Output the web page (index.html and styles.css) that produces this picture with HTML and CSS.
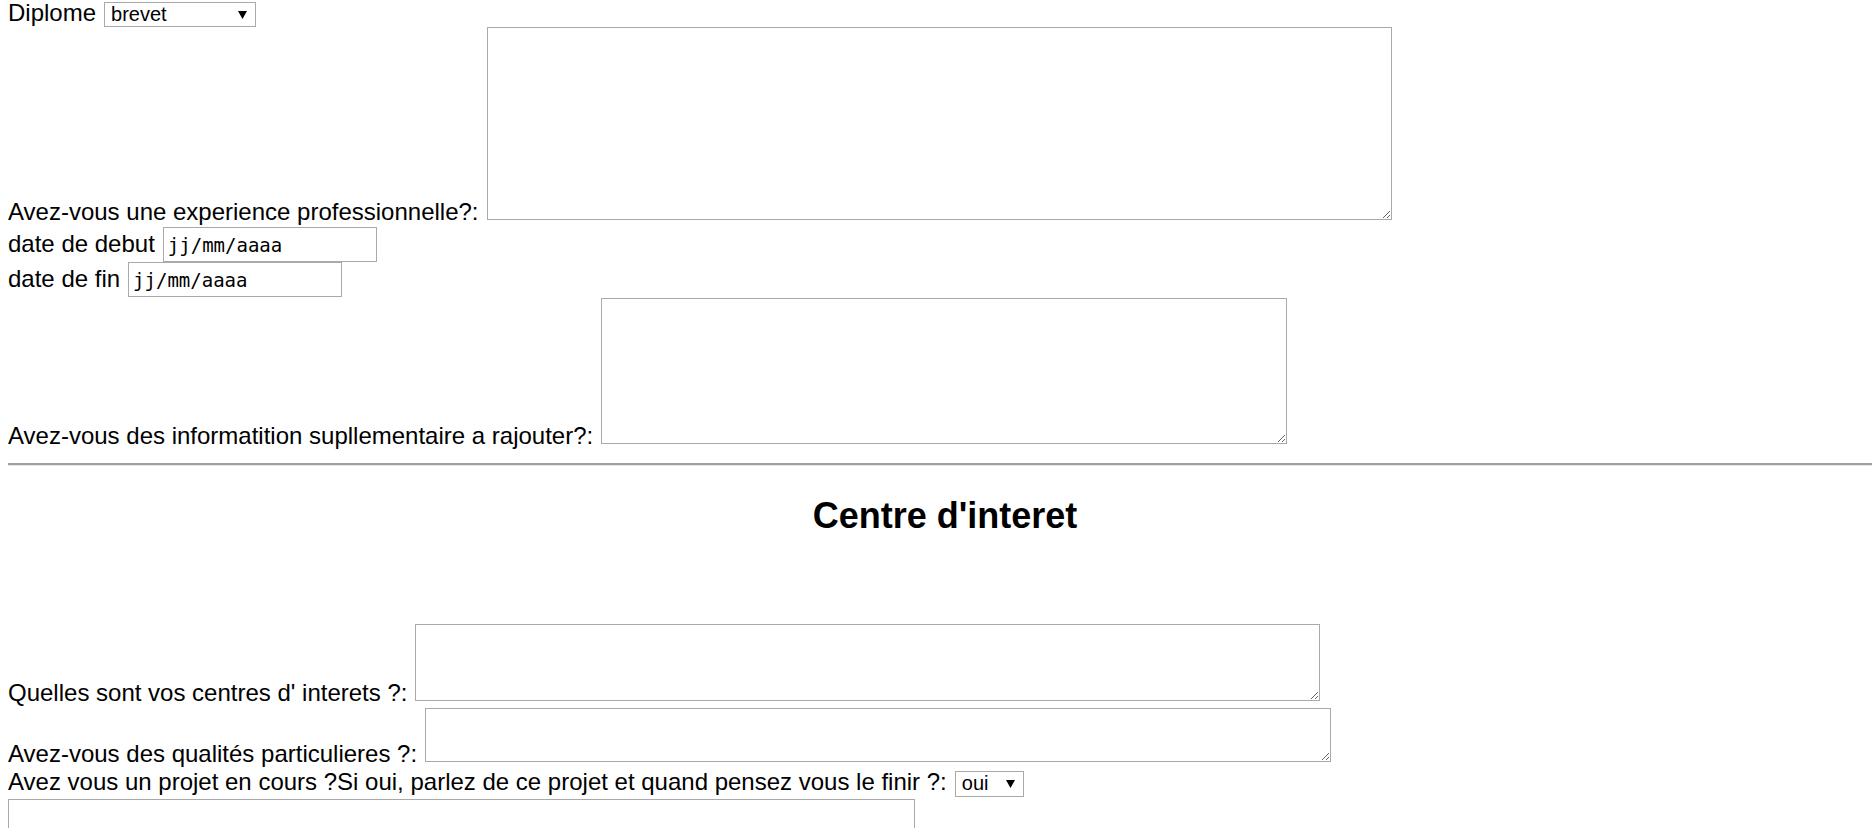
FILE: index.html
```html
<!DOCTYPE html>
<html lang="fr">
<head>
<meta charset="utf-8">
<title>Formulaire</title>
<link rel="stylesheet" href="styles.css">
</head>
<body>
<form class="form">
  <div class="row row-base r-diplome">
    <label class="lbl">Diplome</label>
    <div class="select sel-diplome">
      <span class="sel-text">brevet</span>
      <svg class="arrow" width="9" height="8" viewBox="0 0 9 8"><polygon points="0,0 9,0 4.5,8" fill="#000"/></svg>
    </div>
  </div>

  <div class="row row-area r-exp">
    <label class="lbl lbl-area">Avez-vous une experience professionnelle?:</label>
    <textarea class="area area-exp"></textarea>
  </div>

  <div class="row row-base r-debut">
    <label class="lbl">date de debut</label>
    <input type="text" class="date" value="jj/mm/aaaa">
  </div>

  <div class="row row-base r-fin">
    <label class="lbl">date de fin</label>
    <input type="text" class="date" value="jj/mm/aaaa">
  </div>

  <div class="row row-area r-info">
    <label class="lbl lbl-area">Avez-vous des informatition supllementaire a rajouter?:</label>
    <textarea class="area area-info"></textarea>
  </div>

  <hr class="sep">

  <h2 class="title">Centre d'interet</h2>

  <div class="row row-area r-centres">
    <label class="lbl lbl-area">Quelles sont vos centres d' interets ?:</label>
    <textarea class="area area-centres"></textarea>
  </div>

  <div class="row row-area r-qual">
    <label class="lbl lbl-area">Avez-vous des qualités particulieres ?:</label>
    <textarea class="area area-qual"></textarea>
  </div>

  <div class="row row-base r-projet">
    <label class="lbl">Avez vous un projet en cours ?Si oui, parlez de ce projet et quand pensez vous le finir ?:</label>
    <div class="select sel-oui">
      <span class="sel-text">oui</span>
      <svg class="arrow" width="9" height="8" viewBox="0 0 9 8"><polygon points="0,0 9,0 4.5,8" fill="#000"/></svg>
    </div>
  </div>

  <div class="row r-projet-area">
    <textarea class="area area-projet"></textarea>
  </div>
</form>
</body>
</html>
```

FILE: styles.css
```css
html, body {
  background: #fff;
}

body {
  margin: 0 0 0 8px;
  font-family: "Liberation Sans", Arial, sans-serif;
  font-size: 24px;
  color: #000;
  overflow: hidden;
}

.form {
  display: block;
}

.row {
  display: flex;
  column-gap: 8px;
}

.row-base {
  align-items: baseline;
}

.row-area {
  align-items: flex-end;
}

.lbl {
  white-space: nowrap;
  line-height: normal;
}

.lbl-area {
  line-height: 17px;
}

/* fake select boxes */
.select {
  display: inline-flex;
  align-items: center;
  justify-content: space-between;
  box-sizing: border-box;
  border: 1px solid #a9a9a9;
  background: #fff;
  padding: 0 8px 0 6px;
  font-family: "Liberation Sans", Arial, sans-serif;
  font-size: 20px;
  color: #000;
}

.sel-text {
  line-height: 23px;
}

.arrow {
  display: block;
  flex: none;
}

.sel-diplome {
  width: 152px;
  height: 25px;
}

.sel-oui {
  width: 69px;
  height: 26px;
}

/* date inputs */
.date {
  box-sizing: border-box;
  width: 214px;
  height: 35px;
  margin: 0;
  padding: 0 4px;
  border: 1px solid #a9a9a9;
  border-radius: 0;
  background: #fff;
  font-family: "DejaVu Sans Mono", "Liberation Mono", monospace;
  font-size: 19px;
  color: #000;
  outline: none;
}

/* textareas */
.area {
  box-sizing: border-box;
  margin: 0;
  padding: 2px;
  border: 1px solid #a9a9a9;
  border-radius: 0;
  background: #fff;
  font-family: "DejaVu Sans Mono", monospace;
  font-size: 13px;
  outline: none;
}

.area-exp { width: 905px; height: 193px; }
.area-info { width: 686px; height: 146px; }
.area-centres { width: 905px; height: 77px; }
.area-qual { width: 906px; height: 54px; }
.area-projet { width: 907px; height: 150px; }

/* vertical rhythm */
.r-diplome { margin-top: -1px; }
.r-exp { margin-top: 0; }
.r-debut { margin-top: 7px; }
.r-fin { margin-top: 0; }
.r-info { margin-top: 1px; }

.sep {
  margin: 19px 0 0 0;
  height: 0;
  border: 0;
  border-top: 2px solid #a0a0a0;
  border-bottom: 1px solid #e6e6e6;
}

.title {
  margin: 29px 0 0 0;
  padding-left: 10px;
  text-align: center;
  font-size: 36px;
  font-weight: bold;
  line-height: 41px;
}

.r-centres { margin-top: 88px; }
.r-qual { margin-top: 7px; }
.r-projet { margin-top: 6px; }
.r-projet-area { margin-top: 2px; }
```
